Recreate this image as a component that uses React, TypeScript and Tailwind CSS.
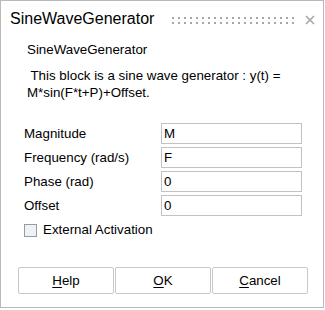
import React from "react";

const font = { fontFamily: '"Liberation Sans", Arial, sans-serif' };

function Grip() {
  const dots = [];
  for (let i = 0; i < 21; i++) {
    dots.push(<rect key={"a" + i} x={i * 6} y={0} width={2} height={2} fill="#a6a6a6" />);
    dots.push(<rect key={"b" + i} x={i * 6} y={5} width={2} height={2} fill="#a6a6a6" />);
  }
  return (
    <svg width="124" height="7" viewBox="0 0 124 7" className="block">
      {dots}
    </svg>
  );
}

function CloseX() {
  return (
    <svg width="10" height="10" viewBox="0 0 10 10" className="block">
      <path d="M1 1 L9 9 M9 1 L1 9" stroke="#a6a6a6" strokeWidth="1.6" fill="none" />
    </svg>
  );
}

function Row({ label, value }: { label: string; value: string }) {
  return (
    <div className="flex items-center h-[21px]">
      <div className="w-[160px] pl-[23px] leading-[21px] text-[13.33px] text-black">{label}</div>
      <div className="w-[141px] h-[21px] border border-[#c2c2c2] bg-white pl-[2px] leading-[19px] text-[13.33px] text-black">
        {value}
      </div>
    </div>
  );
}

function Btn({ first, rest }: { first: string; rest: string }) {
  return (
    <div className="w-[96px] h-[27px] border border-[#c8c8c8] rounded-[2px] bg-white flex items-center justify-center text-[13.33px] text-black">
      <span>
        <span className="underline underline-offset-2">{first}</span>
        {rest}
      </span>
    </div>
  );
}

export default function App() {
  return (
    <div className="w-[325px] h-[310px] bg-white" style={font}>
      <div className="w-[324px] h-[308px] border border-[#bababa] bg-white flex flex-col">
        <div className="flex items-center h-[20px] mt-[8px]">
          <div className="w-[171px] pl-[9px] text-[16px] leading-[20px] text-black">SineWaveGenerator</div>
          <div className="mt-[2px]">
            <Grip />
          </div>
          <div className="ml-[9px] mt-[1px]">
            <CloseX />
          </div>
        </div>
        <div className="mt-[13px] pl-[26px] text-[13.33px] leading-[16px] text-black">SineWaveGenerator</div>
        <div className="mt-[9px] pl-[26px] pr-[20px] text-[13.33px] leading-[17px] text-black whitespace-pre">
          {" This block is a sine wave generator : y(t) =\nM*sin(F*t+P)+Offset."}
        </div>
        <div className="mt-[22px] flex flex-col gap-[3px]">
          <Row label="Magnitude" value="M" />
          <Row label="Frequency (rad/s)" value="F" />
          <Row label="Phase (rad)" value="0" />
          <Row label="Offset" value="0" />
        </div>
        <div className="mt-[6px] flex items-center pl-[23px]">
          <div className="w-[13px] h-[13px] border border-[#9a9a9a] bg-[#eef1f5]"></div>
          <div className="ml-[6px] text-[13.33px] leading-[16px] text-black">External Activation</div>
        </div>
        <div className="mt-[29px] flex pl-[17px] gap-[1px]">
          <Btn first="H" rest="elp" />
          <Btn first="O" rest="K" />
          <Btn first="C" rest="ancel" />
        </div>
      </div>
    </div>
  );
}
